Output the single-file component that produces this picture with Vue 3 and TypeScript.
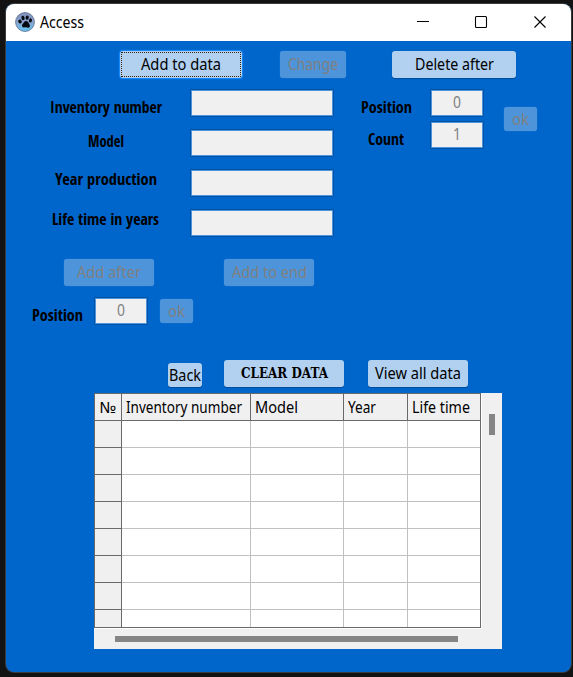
<script setup lang="ts">
import { h } from 'vue'
import type { FunctionalComponent } from 'vue'

interface FitProps {
  t: string
  w: number
  base: number
  tall?: number
}

// One line of text fitted to a width, sitting on a given baseline
const Fit: FunctionalComponent<FitProps> = (p) =>
  h('svg', { class: 'fit', width: p.w, height: p.tall ?? 26 }, [
    h('text', { x: 0, y: p.base, textLength: p.w, lengthAdjust: 'spacingAndGlyphs' }, p.t),
  ])
Fit.props = ['t', 'w', 'base', 'tall']

const fields = [
  { label: 'Inventory number', w: 112, base: 23 },
  { label: 'Model', w: 36, base: 17 },
  { label: 'Year production', w: 102, base: 15 },
  { label: 'Life time in years', w: 107, base: 15 },
]
const columns = [
  { name: '№', w: 17 },
  { name: 'Inventory number', w: 116 },
  { name: 'Model', w: 43 },
  { name: 'Year', w: 28 },
  { name: 'Life time', w: 58 },
]
const rowCount = 8
</script>

<template>
  <div class="desktop">
    <main class="window">
      <header class="titlebar">
        <svg class="paw" width="20" height="20" viewBox="0 0 20 20">
          <defs>
            <linearGradient id="ball" x1="0" y1="0" x2="0" y2="1">
              <stop offset="0" stop-color="#7f8fb8" />
              <stop offset=".5" stop-color="#8aa3cc" />
              <stop offset="1" stop-color="#5cc8f4" />
            </linearGradient>
          </defs>
          <circle cx="10" cy="10" r="9.4" fill="url(#ball)" stroke="#6c7a9e" stroke-width="1" />
          <g fill="#060a12">
            <ellipse cx="5" cy="9.6" rx="1.7" ry="2" transform="rotate(-30 5 9.6)" />
            <ellipse cx="8" cy="6" rx="1.6" ry="2.2" transform="rotate(-12 8 6)" />
            <ellipse cx="12.2" cy="5.6" rx="1.6" ry="2.2" transform="rotate(6 12.2 5.6)" />
            <ellipse cx="15.4" cy="8.4" rx="1.5" ry="2.1" transform="rotate(20 15.4 8.4)" />
            <path d="M11 9C9.2 9 8.8 10.8 7.8 11.8C6.2 13.2 7 15.6 9 15.4C10.2 15.2 11.4 15.3 12.6 15.7C14.8 16.1 15.6 13.8 14.4 12.2C13.4 10.8 12.8 9 11 9Z" />
          </g>
        </svg>
        <Fit class="ui" t="Access" :w="44" :base="24" :tall="37" />
        <svg class="controls" width="130" height="14" viewBox="0 0 130 14" fill="none" stroke="#000" stroke-width="1.1">
          <path d="M0 6.5H12" />
          <rect x="58.5" y="1.5" width="11" height="11" rx="1" />
          <path d="M117.5 1.5L128.5 12.5M128.5 1.5L117.5 12.5" />
        </svg>
      </header>

      <div class="actions">
        <button class="btn focused"><Fit t="Add to data" :w="80" :base="19" /></button>
        <button class="btn" disabled><Fit t="Change" :w="50" :base="19" /></button>
        <button class="btn wide"><Fit t="Delete after" :w="79" :base="19" /></button>
      </div>

      <section class="form">
        <div class="fields">
          <div v-for="f in fields" :key="f.label" class="field">
            <div class="caption"><Fit class="label" :t="f.label" :w="f.w" :base="f.base" /></div>
            <div class="box"></div>
          </div>
        </div>
        <div class="range">
          <div class="pair"><Fit class="label" t="Position" :w="51" :base="23" /><div class="box spin"><Fit t="0" :w="8" :base="17" :tall="24" /></div></div>
          <div class="pair count"><Fit class="label" t="Count" :w="36" :base="23" /><div class="box spin"><Fit t="1" :w="8" :base="17" :tall="24" /></div></div>
        </div>
        <button class="btn ok" disabled><Fit t="ok" :w="17" :base="18" :tall="24" /></button>
      </section>

      <div class="inserts">
        <button class="btn" disabled><Fit t="Add after" :w="64" :base="19" /></button>
        <button class="btn" disabled><Fit t="Add to end" :w="75" :base="19" /></button>
      </div>
      <div class="place">
        <Fit class="label" t="Position" :w="51" :base="23" />
        <div class="box spin"><Fit t="0" :w="8" :base="17" :tall="24" /></div>
        <button class="btn ok" disabled><Fit t="ok" :w="17" :base="18" :tall="24" /></button>
      </div>

      <div class="views">
        <button class="btn back"><Fit t="Back" :w="32" :base="18" :tall="24" /></button>
        <button class="btn clear"><Fit class="stencil" t="CLEAR DATA" :w="87" :base="18" /></button>
        <button class="btn all"><Fit t="View all data" :w="86" :base="19" /></button>
      </div>

      <section class="table">
        <div class="grid">
          <div v-for="c in columns" :key="c.name" class="cell head"><Fit :t="c.name" :w="c.w" :base="19" /></div>
          <template v-for="r in rowCount" :key="r">
            <div v-for="(c, i) in columns" :key="c.name" class="cell" :class="{ fixed: i === 0 }"></div>
          </template>
        </div>
        <div class="vbar"><div class="vthumb"></div></div>
        <div class="hbar"><div class="hthumb"></div></div>
      </section>
    </main>
  </div>
</template>

<style>
body { background: #131313; }
</style>

<style scoped>
* { box-sizing: border-box; }
.desktop {
  display: grid; width: 573px; height: 677px; padding: 4px 2px 4px 6px; background: #131313; overflow: hidden;
  font: 15.5px "Noto Sans", "Open Sans", sans-serif;
}
.window {
  height: 668px; border-radius: 8px; overflow: hidden; background: #06c; box-shadow: 0 0 0 1px #3b3b3b;
}
.fit { display: block; flex: none; overflow: visible; fill: currentColor; }
.titlebar { height: 37px; background: #fff; display: flex; align-items: center; padding-left: 9px; }
.paw { margin: 0 5px 1px 0; }
.controls { margin: 0 24px 1px auto; }
.label { font: bold 16px "Open Sans Condensed", "Liberation Sans Narrow", "Open Sans", sans-serif; }
.btn {
  display: flex; justify-content: center; align-items: flex-start; flex: none;
  height: 27px; padding: 0; border: 0; border-radius: 3px; font: inherit; color: #000;
  background: #b2d1f0; box-shadow: 0 1px 1px #004c99, 0 0 1px #0058b0;
}
.btn:disabled { background: #4d94db; color: #808080; box-shadow: 0 0 1px #4d94db; }
.actions { display: grid; grid-template-columns: 122px 66px 124px; column-gap: 38px; margin: 10px 0 0 114px; }
.actions .wide { margin-left: 8px; width: 124px; }
.focused { position: relative; box-shadow: 0 0 1px 1px #198cff; }
.focused::after { content: ""; position: absolute; inset: 1px; border: 1px dotted #3c2408; }
.form { display: flex; margin: 12px 0 0 15px; }
.fields { display: grid; gap: 14px; }
.field { display: flex; }
.caption { width: 170px; padding-right: 1px; display: flex; justify-content: center; }
.box {
  width: 142px; height: 26px; flex: none; background: #f0f0f0;
  border: 1px solid #4d94db; box-shadow: 0 0 0 1px #0053a6;
}
.spin { width: 52px; display: flex; justify-content: center; color: #808080; }
.range { display: grid; gap: 6px; align-content: start; margin-left: 28px; width: 122px; }
.pair { display: flex; justify-content: space-between; }
.count { padding-left: 7px; }
.ok { width: 33px; height: 24px; }
.form .ok { margin: 17px 0 0 21px; }
.inserts { display: flex; gap: 70px; margin: 23px 0 0 58px; }
.inserts .btn { width: 90px; }
.place { display: flex; margin: 12px 0 0 26px; }
.place .spin { margin: 0 13px 0 12px; }
.place .ok { margin-top: 1px; }
.views { display: flex; align-items: flex-end; margin: 36px 0 0 162px; }
.back { width: 34px; height: 24px; }
.clear { width: 120px; margin: 0 24px 0 22px; }
.all { width: 100px; }
.stencil { font: bold 14px "DejaVu Serif", serif; }
.table {
  width: 408px; height: 256px; margin: 6px 0 0 88px; background: #f0f0f0;
  display: grid; grid-template-columns: 387px 21px; grid-template-rows: 235px 21px;
}
.grid {
  display: grid; grid-template-columns: 27px 129px 93px 64px 72px; grid-template-rows: 27px; grid-auto-rows: 27px;
  width: 387px; height: 235px; overflow: hidden; background: #fff;
  border: 1px solid #696969; box-shadow: 1px 1px 0 #fff;
}
.cell { border-right: 1px solid #c0c0c0; border-bottom: 1px solid #c0c0c0; padding-left: 4px; }
.cell:nth-child(5n) { border-right: 0; }
.fixed { background: #f0f0f0; border-color: #696969; }
.head { background: #f0f0f0; border-color: #696969; }
.vbar { padding: 21px 0 0 8px; }
.vthumb { width: 6px; height: 21px; background: #858585; }
.hbar { padding: 8px 0 0 21px; }
.hthumb { width: 343px; height: 6px; background: #858585; }
</style>
